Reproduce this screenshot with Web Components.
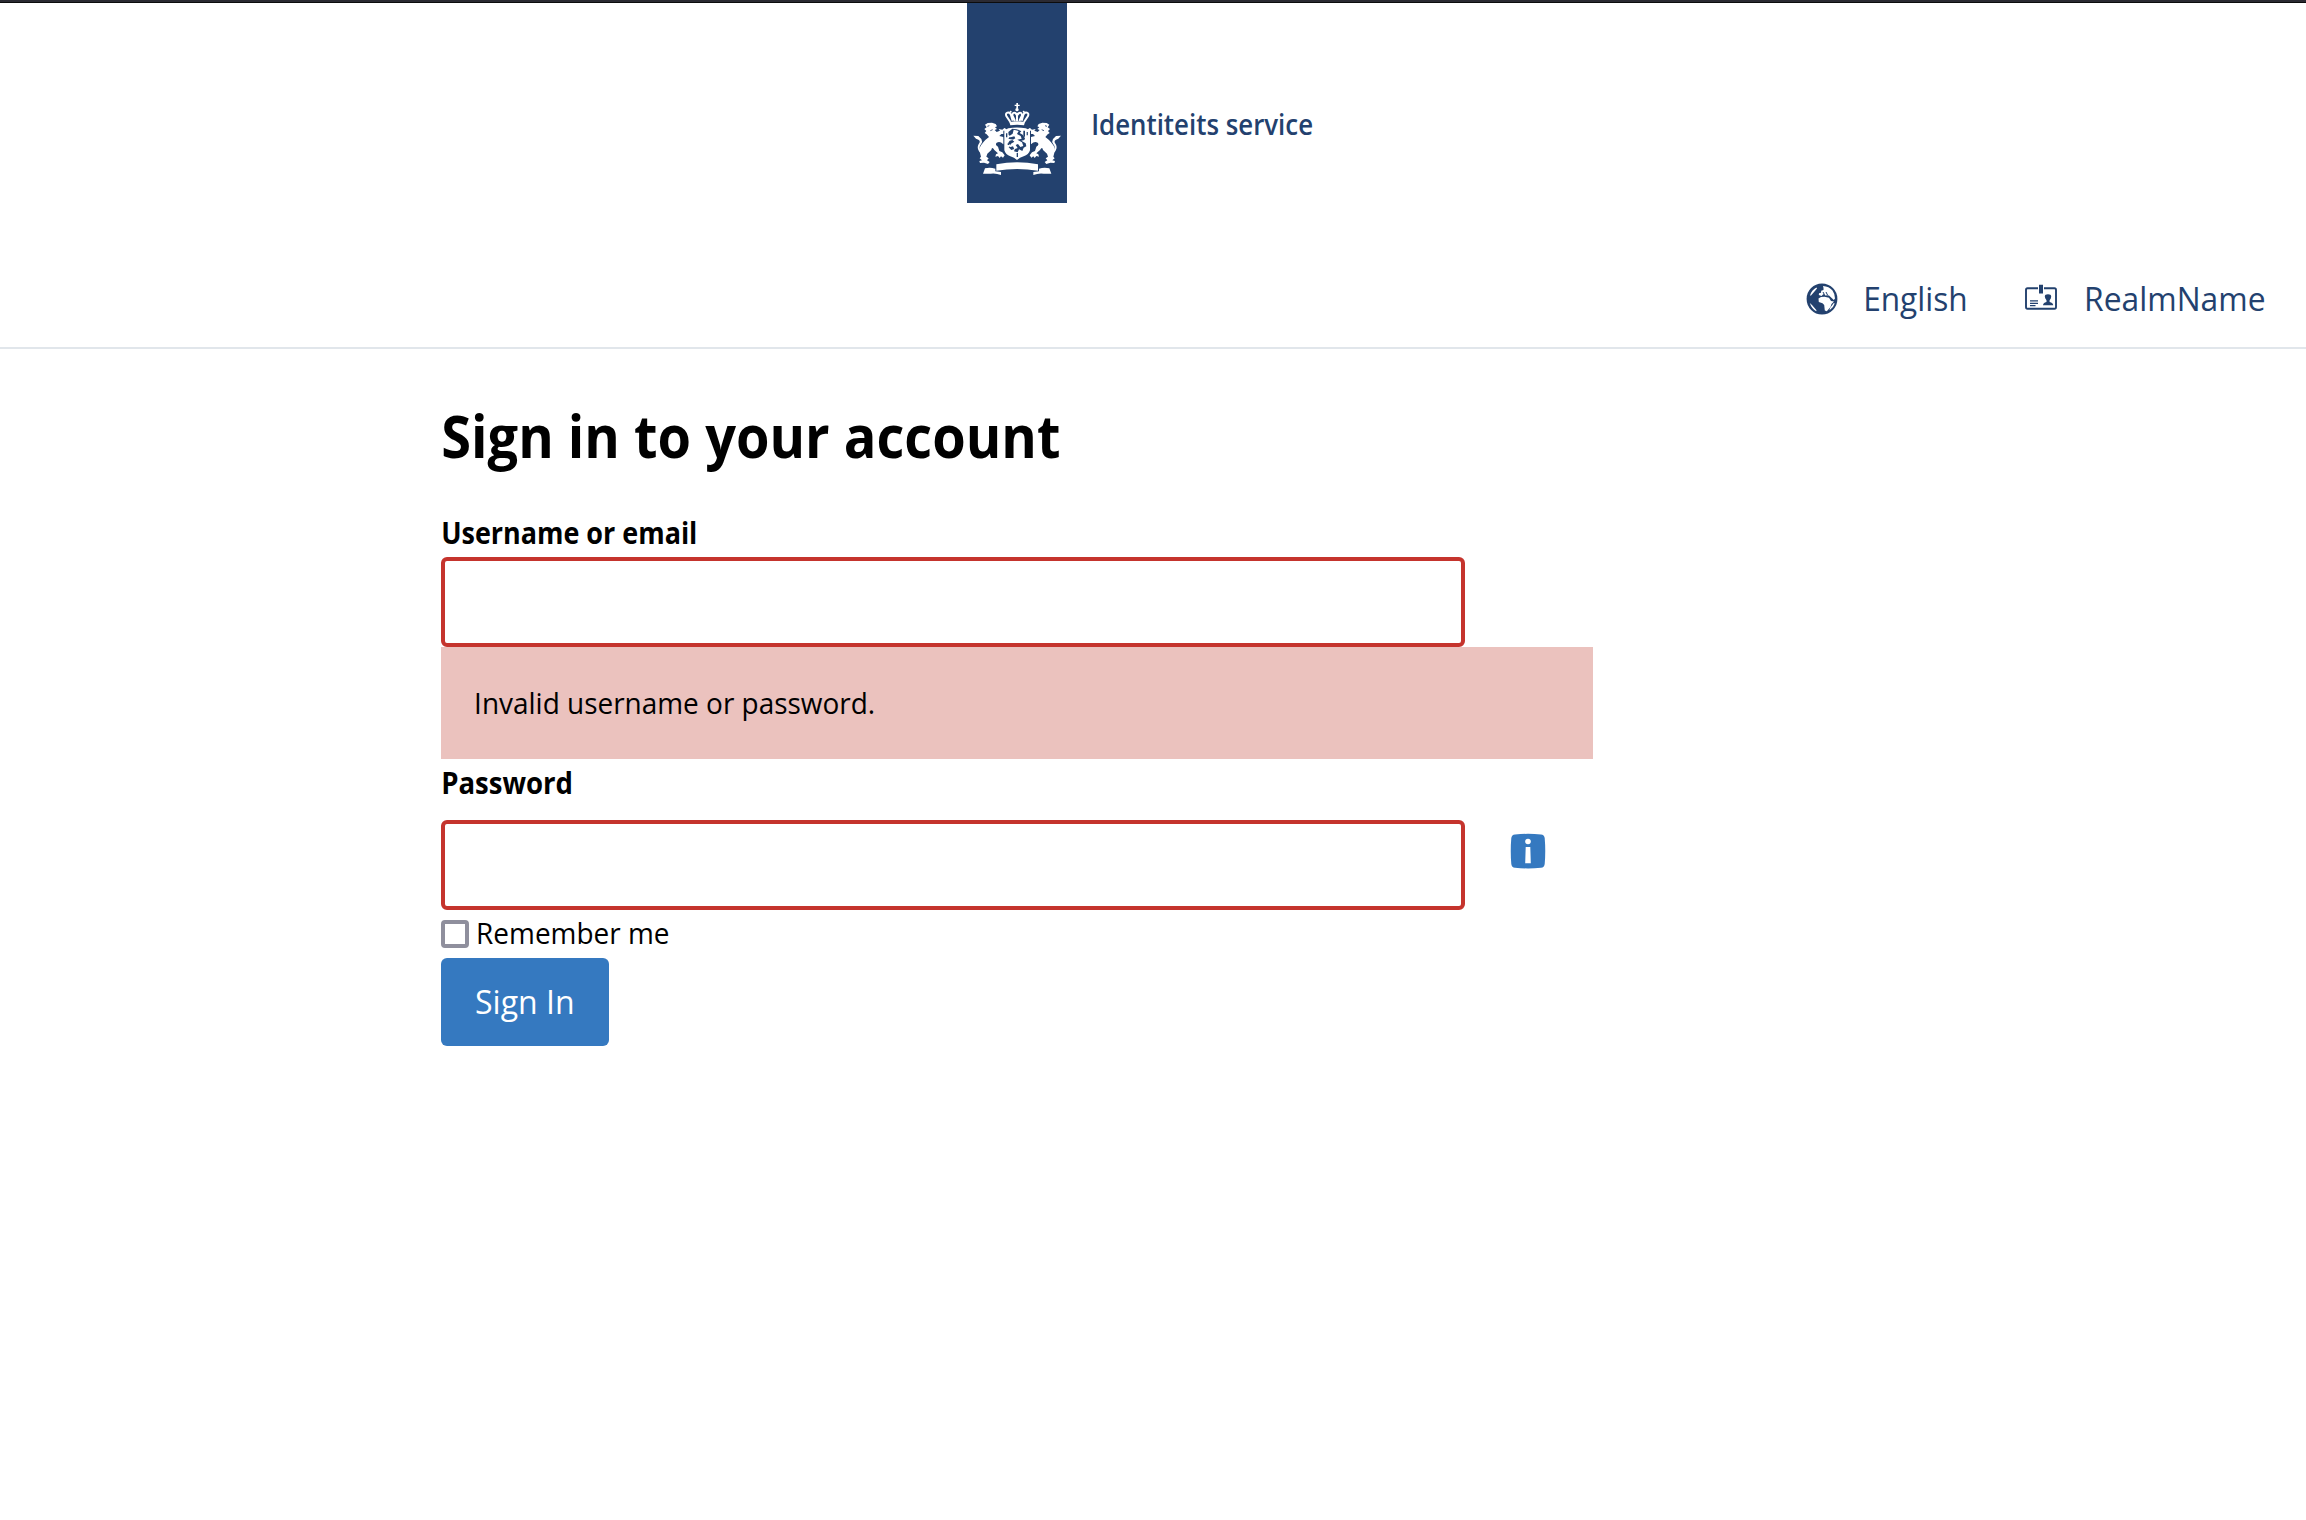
<!DOCTYPE html>
<html lang="en">
<head>
<meta charset="utf-8">
<title>Sign in to your account</title>
<style>
html,body{margin:0;background:#fff;font-family:"Open Sans","Noto Sans",sans-serif;color:#000}
</style>
</head>
<body>
<login-page></login-page>
<script>
const define = (name, html, init) => customElements.define(name, class extends HTMLElement {
  connectedCallback() {
    if (this.shadowRoot) return;
    const t = document.createElement('template');
    t.innerHTML = html;
    this.attachShadow({ mode: 'open' }).append(t.content.cloneNode(true));
    if (init) init.call(this, this.shadowRoot);
  }
});

/* One line of text condensed to a given ink width. */
define('condensed-text', `<style>
:host{display:block;flex:none;white-space:nowrap}
span{display:inline-block;transform-origin:0 50%}
</style><span></span>`, function (root) {
  const size = +this.getAttribute('size'), weight = this.getAttribute('weight') || 400;
  const width = +this.getAttribute('width'), line = +this.getAttribute('line');
  const span = root.querySelector('span');
  span.textContent = this.getAttribute('text');
  const ctx = document.createElement('canvas').getContext('2d');
  ctx.font = weight + ' ' + size + 'px "Open Sans"';
  const m = ctx.measureText(span.textContent);
  const s = width / (m.actualBoundingBoxLeft + m.actualBoundingBoxRight);
  this.style.cssText = `width:${width}px;height:${line}px;line-height:${line}px;font-size:${size}px;font-weight:${weight}`;
  span.style.transform = `translateX(${m.actualBoundingBoxLeft * s}px) scaleX(${s})`;
});

define('coat-of-arms', `<style>:host{display:block}svg{display:block}</style>
<svg width="100" height="120" viewBox="21 0 300 360" fill="#fff">
<defs><g id="lion">
<path d="M75 104L83 99L96 98L107 102L111 109L105 112L111 117L104 120L110 126L120 122L116 117L127 119L133 114L139 118L137 125L131 126L134 132L124 132L118 138L130 141L137 148L138 166L129 162Q120 153 110 158Q104 164 114 170L118 183L127 187L134 196L129 203L123 199L119 204L114 198L106 200L108 193L114 190L103 180Q96 168 94 180L82 191L79 200L86 205L81 211L89 216L84 222L72 218L60 219L58 213L66 211L59 205L63 200L60 188Q56 176 63 166Q70 156 76 150L87 141L80 133L74 129L79 123L73 117L80 112Z"/>
<path d="M40 137L55 138L64 147Q69 155 63 163Q56 171 61 180L67 185L59 187Q49 173 56 162Q63 153 55 149L48 146Z"/>
</g></defs>
<use href="#lion"/><use href="#lion" transform="matrix(-1 0 0 1 343 0)"/>
<g fill="none" stroke="#23416e" stroke-width="2.500"><path d="M82 109l6-2M91 122l7-3M261 109l-6-2M252 122l-7-3"/></g>
<path fill="#23416e" d="M130 122H213V185L171 214L130 185Z"/>
<path fill-rule="evenodd" d="M133 115Q139 120 145 115Q171 110 197 115Q204 120 210 115V181Q206 194 191 199Q179 203 171 210Q163 203 151 199Q137 194 133 181ZM145 126L157 116L175 119L184 124L179 129L188 134L195 145L193 150L184 152L197 160L199 169L191 173L187 183L177 178L173 187L162 184L165 176L154 180L146 172L154 166L144 160L149 152L160 149L145 146L151 139L146 135Z"/>
<path d="M145 140L158 131L161 119L176 123L171 132L182 138L185 146L172 149L186 157L190 168L181 171L174 162L167 165L173 174L163 178L159 169L149 172L153 161L163 155L157 150L166 145L163 139L152 142Z"/>
<path fill="#23416e" d="M190 122h5v18h-5zM200 126h3.500v10h-3.500zM138 130h4v12h-4zM143 160h5v5h-5zM170 189h4v12h-4z"/>
<path d="M148 96Q171 91 195 96L192 106Q171 102 151 106Z"/>
<path fill="none" stroke="#fff" stroke-width="6" d="M151 96L139 78Q136 70 142 68Q150 66 153 75L158 92M192 96L204 78Q207 70 201 68Q193 66 190 75L185 92M165 93L157 76Q158 66 166 69L171 76L177 69Q185 66 186 76L178 93M171 68V93"/>
<circle cx="171" cy="59" r="5"/><path d="M169 39h5v5h5v4h-5v8h-5v-8h-5v-4h5z"/>
<circle cx="152" cy="65" r="3"/><circle cx="191" cy="65" r="3"/>
<path d="M109 223Q171 211 234 223V242Q171 232 109 242Z"/>
<path d="M75 235Q90 231 106 236V244L123 246V255Q108 249 92 251L69 251ZM268 235Q253 231 237 236V244L220 246V255Q235 249 251 251L274 251Z"/>
</svg>`);

define('site-header', `<style>
:host{display:block;color:#23416e}
.chrome{height:2px;background:#2b2a32;border-bottom:1px solid #0c0c0d}
.brand{display:flex;height:200px;padding-left:967px;gap:25.5px}
.ribbon{width:100px;height:200px;background:#23416e;padding-top:87px;box-sizing:border-box}
.name{padding-top:100.500px}
nav{display:flex;height:146px;box-sizing:border-box;padding:71px 42px 0 0;justify-content:flex-end;border-bottom:2px solid #e1e6eb}
.globe{width:32px;height:32px;margin:9px 28px 0 0}
.badge{width:32px;height:28px;margin:10px 30px 0 60px}
</style>
<div class="chrome"></div>
<div class="brand"><div class="ribbon"><coat-of-arms></coat-of-arms></div>
<condensed-text class="name" text="Identiteits service" size="28" weight="600" width="219" line="40"></condensed-text></div>
<nav>
<svg class="globe" viewBox="0 0 32 32"><circle cx="16" cy="16" r="15.4" fill="#23416e"/><g fill="#fff">
<path d="M4 12.500Q5.500 7 10.500 4.400L11 5.500L8.500 8.500L5 12.500ZM3.800 20L6 22L10.500 27.300L10.200 28.200Q5.500 25.500 3.800 20ZM27.800 20L28.700 20.500Q27.500 24.700 23.500 27.300L24 25Z"/>
<path d="M17 3Q23 3.400 26.500 7.500Q29 11 29 15.500L27.800 17L23 12.500L21.500 12.200L19.500 12.500L17.500 11L15.500 13L12.800 12L13 10.300L15 9.800L15.200 7.800L17.500 7L17.500 5ZM12.500 15.500L15 14L18.500 13.800L23 14.700L25 18L28 18.500L25.500 21L24.500 24L20.800 28.200L18.800 27.500L18.200 22L16.500 20.300L12.800 19Z"/></g>
<path fill="none" stroke="#23416e" stroke-width="1" d="M17 9L18.500 11.800M20 9L21.500 12"/></svg>
<condensed-text text="English" size="33" weight="500" width="99.500" line="50"></condensed-text>
<svg class="badge" viewBox="0 0 32 28"><path d="M13 4.300H2.500Q1 4.300 1 6V23Q1 24.800 2.500 24.800H29.500Q31 24.800 31 23V6Q31 4.300 29.500 4.300H19" fill="none" stroke="#23416e" stroke-width="1.900"/>
<path fill="#23416e" d="M14 .8H18V9.500H14ZM5 16.200h8v1.300H5zM5 18.700h8v1.200H5zM5 21h5.500v1.200H5zM18 21.200Q18 19 21.500 18V16.300Q19.800 14 19.800 12.500Q19.800 10.300 23 10.300Q26.200 10.300 26.200 12.500Q26.200 14.500 24.600 16.300V18Q28.200 19 28.200 21.200Z"/></svg>
<condensed-text text="RealmName" size="33" weight="500" width="177" line="50"></condensed-text>
</nav>`);

define('text-field', `<style>
:host{display:block}
input{display:block;box-sizing:border-box;width:1024px;height:90px;margin:0;border:4px solid #c5342d;border-radius:6px;background:#fff;padding:0 20px;font:inherit;font-size:32px;outline:0}
</style><input>`, function (root) { root.querySelector('input').type = this.getAttribute('type'); });

define('info-icon', `<style>:host{display:block}svg{display:block}</style>
<svg width="36" height="36" viewBox="0 0 36 36"><path fill="#3579c0" d="M5 1.400Q18 .3 31 1.400Q34.300 1.800 34.700 5Q35.800 18 34.700 31Q34.300 34.500 31 34.800Q18 36 5 34.800Q1.700 34.500 1.300 31Q.2 18 1.300 5Q1.700 1.800 5 1.400Z"/>
<circle cx="18" cy="8.500" r="2.800" fill="#fff"/><path fill="#fff" d="M15.700 14h4.600l.5 16.300h-5.600z"/></svg>`);

define('error-message', `<style>
:host{display:flex;box-sizing:border-box;width:1152px;height:112px;padding:34px 0 0 34.500px;background:#ebc2be}
</style><slot></slot>`);

define('check-box', `<style>
:host{display:flex;gap:9px;height:48px;align-items:flex-start}
input{appearance:none;display:block;box-sizing:border-box;width:28px;height:28px;margin:10px 0 0;border:4px solid #8f8f9d;border-radius:4px;background:#fff}
</style><input type="checkbox"><slot></slot>`);

define('primary-button', `<style>
button{display:flex;align-items:flex-start;box-sizing:border-box;width:168px;height:88px;border:0;border-radius:6px;background:#3579c0;color:#fff;padding:19px 0 0 35px;font-family:inherit}
</style><button><slot></slot></button>`);

define('login-form', `<style>
:host{display:block;padding:56px 0 0 441px}
form{display:flex;flex-direction:column}
.title{margin-left:1.500px}
.row{display:flex;gap:45px}
info-icon{padding-top:13px}
.user{margin:48px 0 4px 1.500px}
.pass{margin:4px 0 17px 1.500px}
.remember{margin-top:1px}
</style>
<form>
<condensed-text class="title" text="Sign in to your account" size="59" weight="700" width="616" line="60"></condensed-text>
<condensed-text class="user" text="Username or email" size="29.500" weight="700" width="252.500" line="40"></condensed-text>
<text-field type="text"></text-field>
<error-message><condensed-text text="Invalid username or password." size="29.500" width="397.500" line="44"></condensed-text></error-message>
<condensed-text class="pass" text="Password" size="29.500" weight="700" width="128.500" line="40"></condensed-text>
<div class="row"><text-field type="password"></text-field><info-icon></info-icon></div>
<check-box><condensed-text class="remember" text="Remember me" size="29.500" width="191" line="44"></condensed-text></check-box>
<primary-button><condensed-text text="Sign In" size="33" weight="500" width="96.500" line="50"></condensed-text></primary-button>
</form>`);

define('login-page', `<style>:host{display:block;width:2306px;height:1520px;overflow:hidden}</style>
<site-header></site-header><login-form></login-form>`);
</script>
</body>
</html>
